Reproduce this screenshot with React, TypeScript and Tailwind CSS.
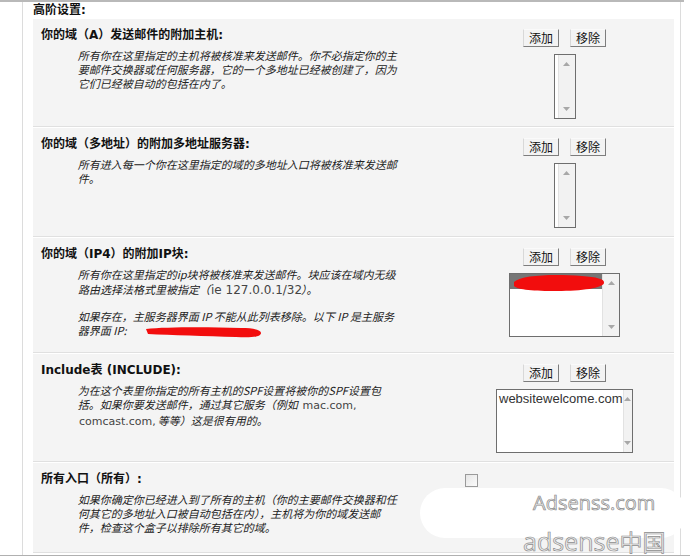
import React from "react";

const cjk = "font-['Noto_Sans_CJK_SC',sans-serif]";
const headCls =
  "font-['DejaVu_Sans','Noto_Sans_CJK_SC',sans-serif] font-bold text-[12px] leading-[17px] text-[#111] whitespace-nowrap";
const descCls =
  "font-['Noto_Sans_CJK_SC',sans-serif] text-[11px] leading-[14px] text-[#222] whitespace-nowrap mt-[4px] ml-[38px]";
const latin = "font-['DejaVu_Sans',sans-serif] text-[11px] text-[#444]";
const sk = "inline-block [transform:skewX(-14deg)]";

function L({ children }: { children: React.ReactNode }) {
  return (
    <div>
      <span className={sk}>{children}</span>
    </div>
  );
}

function Btn({ label }: { label: string }) {
  return (
    <div
      className={`${cjk} h-[18px] px-[5px] flex items-center text-[12px] leading-none text-[#111] bg-[#f3f3f3] border border-t-[#fafafa] border-l-[#d8d8d8] border-r-[#7d7d7d] border-b-[#7d7d7d]`}
    >
      {label}
    </div>
  );
}

function Buttons() {
  return (
    <div className="flex gap-[11px] justify-center">
      <Btn label="添加" />
      <Btn label="移除" />
    </div>
  );
}

function Arrow({ up }: { up?: boolean }) {
  return (
    <svg width="7" height="4" viewBox="0 0 7 4">
      {up ? (
        <path d="M0 4 L3.5 0 L7 4 Z" fill="#a8a8a8" />
      ) : (
        <path d="M0 0 L3.5 4 L7 0 Z" fill="#a8a8a8" />
      )}
    </svg>
  );
}

function ScrollBar() {
  return (
    <div className="w-[17px] h-full bg-[#f2f2f2] border-l border-[#e2e2e2] flex flex-col justify-between items-center py-[7px]">
      <Arrow up />
      <Arrow />
    </div>
  );
}

function NarrowBox() {
  return (
    <div className="w-[22px] h-[65px] border border-[#6e6e6e] bg-white flex justify-end mt-[7px]">
      <ScrollBar />
    </div>
  );
}

function Row({
  h,
  title,
  children,
  right,
}: {
  h: string;
  title: React.ReactNode;
  children: React.ReactNode;
  right: React.ReactNode;
}) {
  return (
    <div className={`${h} bg-[#f4f4f4] border-b border-[#e0e0e0] flex`}>
      <div className="w-[422px] pl-[8px] pt-[8px]">
        <div className={headCls}>{title}</div>
        <div className={descCls}>{children}</div>
      </div>
      <div className="flex-1 pt-[10px] flex flex-col items-center">{right}</div>
    </div>
  );
}

export default function App() {
  return (
    <div className="w-[690px] h-[559px] bg-white relative overflow-hidden">
      <div className="w-[684px] border-t-2 border-[#b9b9b9]">
        <div className="ml-[22px] w-[659px] h-[553px] border-l border-r border-[#dcdcdc] pl-[10px] pr-[6px]">
          <div className={`${headCls} leading-[15px]`}>高阶设置:</div>
          <div className="flex flex-col gap-px bg-white">
            <Row
              h="h-[108px]"
              title="你的域（A）发送邮件的附加主机:"
              right={
                <>
                  <Buttons />
                  <NarrowBox />
                </>
              }
            >
              <L>所有你在这里指定的主机将被核准来发送邮件。你不必指定你的主</L>
              <L>要邮件交换器或任何服务器，它的一个多地址已经被创建了，因为</L>
              <L>它们已经被自动的包括在内了。</L>
            </Row>
            <Row
              h="h-[109px]"
              title="你的域（多地址）的附加多地址服务器:"
              right={
                <>
                  <Buttons />
                  <NarrowBox />
                </>
              }
            >
              <L>所有进入每一个你在这里指定的域的多地址入口将被核准来发送邮</L>
              <L>件。</L>
            </Row>
            <Row
              h="h-[115px]"
              title="你的域（IP4）的附加IP块:"
              right={
                <>
                  <Buttons />
                  <div className="relative w-[111px] h-[64px] border border-[#6e6e6e] bg-white flex mt-[7px]">
                    <div className="flex-1">
                      <div className="h-[15px] bg-[#767676]" />
                    </div>
                    <ScrollBar />
                    <svg
                      className="absolute left-[2px] top-[0px]"
                      width="94"
                      height="19"
                      viewBox="0 0 94 19"
                    >
                      <path
                        d="M2 8 C10 1, 40 0, 70 2 C84 3, 93 5, 92 9 C91 14, 70 17, 45 17 C22 17, 6 16, 2 12 Z"
                        fill="#f20d0d"
                      />
                    </svg>
                  </div>
                </>
              }
            >
              <L>所有你在这里指定的ip块将被核准来发送邮件。块应该在域内无级</L>
              <div className="leading-[17px]">
                <span className={sk}>路由选择法格式里被指定（</span>
                <span className={`${latin} text-[12px]`}>ie 127.0.0.1/32</span>
                <span className={sk}>）。</span>
              </div>
              <div className="h-[10px]" />
              <L>如果存在，主服务器界面 IP 不能从此列表移除。以下 IP 是主服务</L>
              <div className="flex items-center h-[14px]">
                <span className={sk}>器界面 IP:</span>
                <span className="inline-block w-[18px]" />
                <svg width="116" height="14" viewBox="0 0 116 14" className="mt-[3px]">
                  <path
                    d="M0 4 C20 2, 60 2, 95 3 C108 3, 115 5, 115 8 C115 12, 105 13, 90 12 C60 11, 25 10, 2 9 Z"
                    fill="#f20d0d"
                  />
                </svg>
              </div>
            </Row>
            <Row
              h="h-[108px]"
              title="Include表 (INCLUDE):"
              right={
                <>
                  <Buttons />
                  <div className="w-[137px] h-[64px] border border-[#6e6e6e] bg-white flex mt-[7px]">
                    <div className="flex-1 pl-[2px] pt-[1px] font-['Liberation_Sans',sans-serif] text-[13px] leading-[16px] text-[#333]">
                      websitewelcome.com
                    </div>
                    <ScrollBar />
                  </div>
                </>
              }
            >
              <L>为在这个表里你指定的所有主机的SPF设置将被你的SPF设置包</L>
              <div>
                <span className={sk}>括。如果你要发送邮件，通过其它服务（例如 </span>
                <span className={latin}> mac.com,</span>
              </div>
              <div>
                <span className={latin}>comcast.com, </span>
                <span className={sk}>等等）这是很有用的。</span>
              </div>
            </Row>
            <div className="h-[90px] bg-[#f4f4f4] border-b border-[#e0e0e0] flex">
              <div className="w-[422px] pl-[8px] pt-[8px]">
                <div className={headCls}>所有入口（所有）:</div>
                <div className={descCls}>
                  <L>如果你确定你已经进入到了所有的主机（你的主要邮件交换器和任</L>
                  <L>何其它的多地址入口被自动包括在内），主机将为你的域发送邮</L>
                  <L>件，检查这个盒子以排除所有其它的域。</L>
                </div>
              </div>
              <div className="flex-1 pl-[10px] pt-[11px]">
                <div className="w-[13px] h-[13px] border border-[#9a9a9a] bg-gradient-to-br from-[#e6e6e6] to-[#fbfbfb]" />
              </div>
            </div>
          </div>
        </div>
        <div className="w-[690px] border-t border-[#b0b0b0]" />
      </div>

      <div className="absolute left-[420px] top-[488px] w-[266px] h-[50px] rounded-full bg-white" />
      <div className="absolute left-[533px] top-[489px] font-['Open_Sans',sans-serif] text-[20px] leading-[28px] text-[#ececec] [-webkit-text-stroke:0.7px_#8d8d8d] whitespace-nowrap">
        Adsenss.com
      </div>
      <div className="absolute left-[523px] top-[524px] font-['Open_Sans','Noto_Sans_CJK_SC',sans-serif] text-[25px] leading-[34px] text-[#ececec] [-webkit-text-stroke:0.7px_#8d8d8d] whitespace-nowrap">
        adsense<span className="font-['Noto_Sans_CJK_SC',sans-serif] text-[23px]">中国</span>
      </div>
    </div>
  );
}
